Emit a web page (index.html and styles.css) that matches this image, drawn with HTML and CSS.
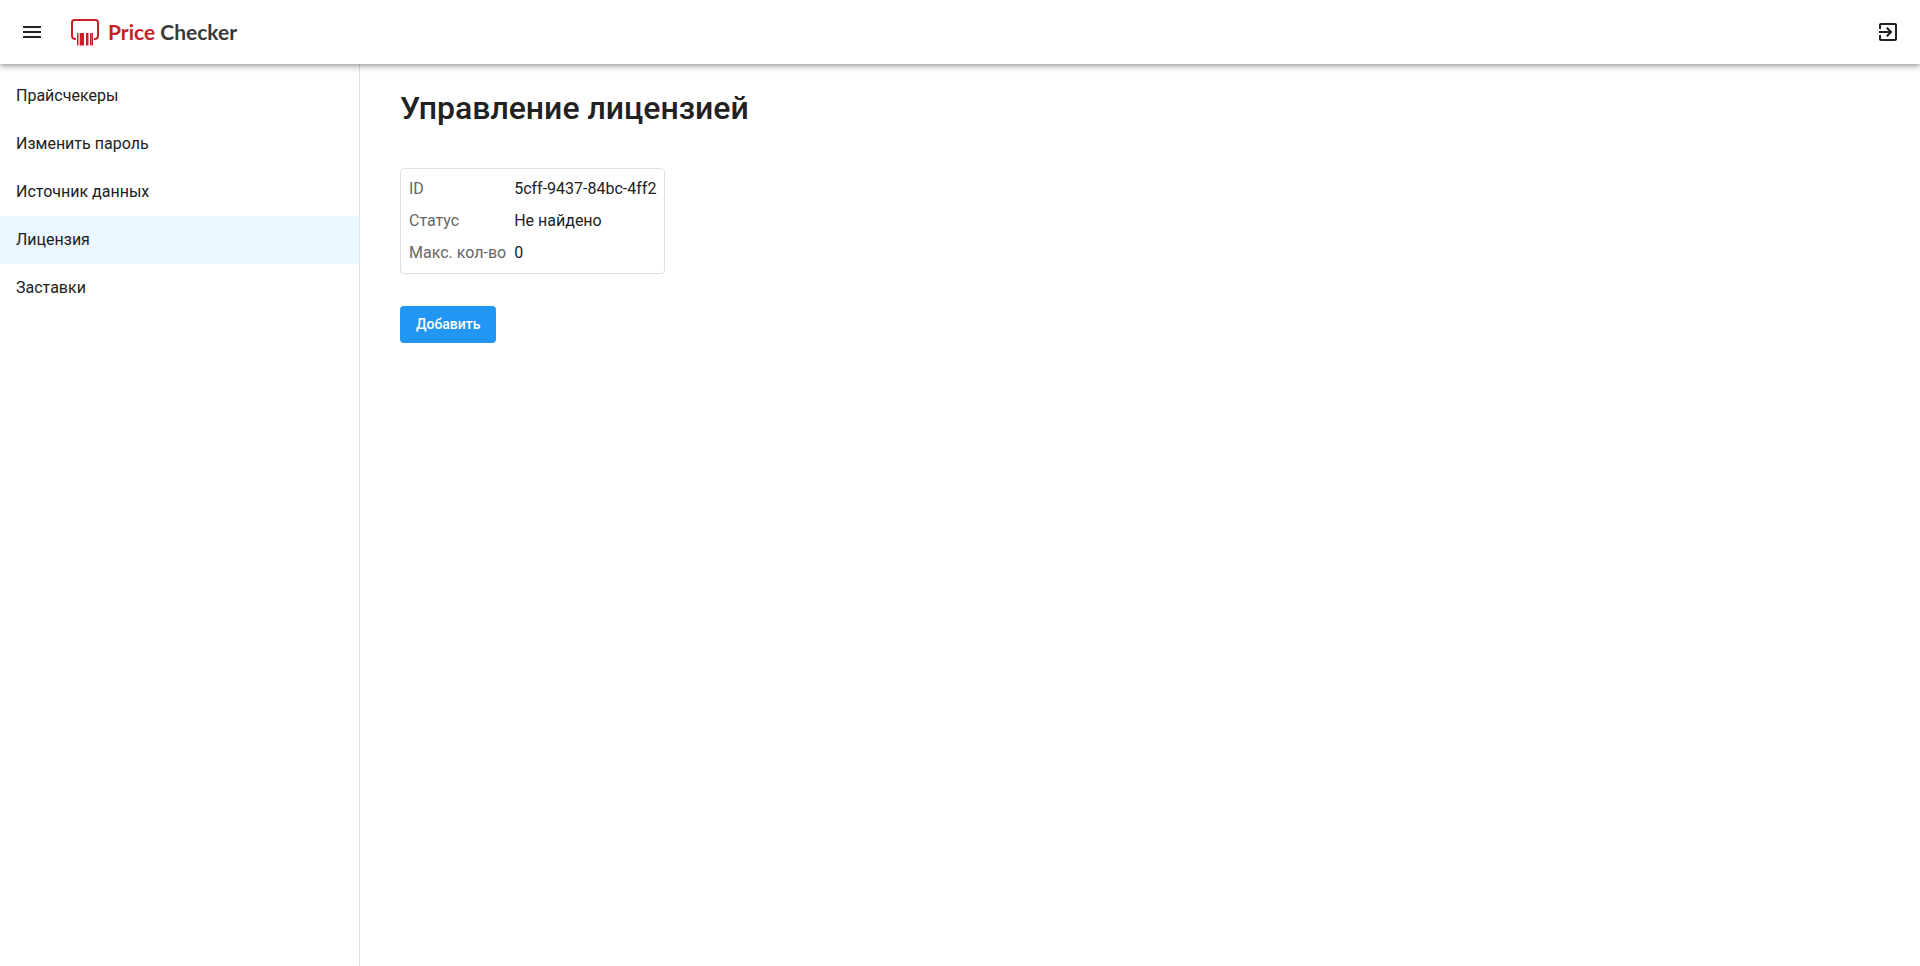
FILE: index.html
```
<!DOCTYPE html>
<html lang="ru">
<head>
  <meta charset="UTF-8">
  <meta name="viewport" content="width=device-width, initial-scale=1.0">
  <title>Price Checker</title>
  <link rel="stylesheet" href="styles.css">
</head>
<body>

  <header class="toolbar">
    <button type="button" class="icon-button" aria-label="Меню">
      <svg viewBox="0 0 24 24" width="24" height="24"><path d="M3 18h18v-2H3v2zm0-5h18v-2H3v2zm0-7v2h18V6H3z"/></svg>
    </button>
    <a href="#" class="logo">
      <svg class="logo-icon" viewBox="0 0 28 28" width="28" height="28">
        <path class="logo-frame" d="M5 21H4.500Q1 21 1 17.500V4.500Q1 2 3.500 2h21Q27 2 27 4.500v13Q27 21 23.500 21H23"/>
        <path d="M6 15h1v12.500H6zM7.500 15h.8v12.500h-.8zM9 15h4v12.500H9zM15 15h2v12.500h-2zM17.500 15h.5v12.500h-.5zM19 15h1v12.500h-1zM20.300 15H22v12.500h-1.700z"/>
      </svg>
      <span class="logo-text"><span class="logo-accent">Price</span> Checker</span>
    </a>
    <button type="button" class="icon-button logout" aria-label="Выйти">
      <svg viewBox="0 0 24 24" width="24" height="24"><path d="M10.090 15.590L11.500 17l5-5-5-5-1.410 1.410L12.670 11H3v2h9.670l-2.580 2.590zM19 3H5c-1.110 0-2 .9-2 2v4h2V5h14v14H5v-4H3v4c0 1.100.89 2 2 2h14c1.100 0 2-.9 2-2V5c0-1.100-.9-2-2-2z"/></svg>
    </button>
  </header>

  <div class="layout">
    <nav class="sidebar">
      <a href="#" class="nav-item">Прайсчекеры</a>
      <a href="#" class="nav-item">Изменить пароль</a>
      <a href="#" class="nav-item">Источник данных</a>
      <a href="#" class="nav-item active">Лицензия</a>
      <a href="#" class="nav-item">Заставки</a>
    </nav>

    <main class="content">
      <h1>Управление лицензией</h1>
      <dl class="license">
        <dt>ID</dt>
        <dd>5cff-9437-84bc-4ff2</dd>
        <dt>Статус</dt>
        <dd>Не найдено</dd>
        <dt>Макс. кол-во</dt>
        <dd>0</dd>
      </dl>
      <button type="button" class="add-button">Добавить</button>
    </main>
  </div>

</body>
</html>
```
FILE: styles.css
```
* {
  box-sizing: border-box;
}

body {
  margin: 0;
  min-height: 100vh;
  display: flex;
  flex-direction: column;
  font-family: Roboto, sans-serif;
  font-size: 16px;
  line-height: 24px;
  color: #212121;
  background-color: #fff;
}

/* header */
.toolbar {
  position: relative;
  z-index: 1;
  display: flex;
  align-items: center;
  height: 64px;
  padding: 0 12px;
  background-color: #fff;
  box-shadow: 0 2px 4px -1px rgba(0, 0, 0, 0.2), 0 4px 5px rgba(0, 0, 0, 0.14), 0 1px 10px rgba(0, 0, 0, 0.12);
}

.icon-button {
  display: flex;
  padding: 8px;
  border: none;
  background: none;
  cursor: pointer;
}

.icon-button svg {
  fill: #212121;
}

.logout {
  margin-left: auto;
}

.logo {
  display: flex;
  align-items: center;
  gap: 9px;
  margin-left: 19px;
  color: #3a3a3a;
  text-decoration: none;
}

.logo-icon {
  fill: #c62026;
}

.logo-frame {
  fill: none;
  stroke: #c62026;
  stroke-width: 2;
}

.logo-text {
  font-family: Lato, sans-serif;
  font-size: 21px;
  font-weight: 700;
}

.logo-accent {
  color: #c62026;
}

/* side menu */
.layout {
  display: flex;
  flex: 1;
}

.sidebar {
  flex: none;
  width: 360px;
  padding: 8px 0;
  border-right: 1px solid #e0e0e0;
}

.nav-item {
  display: block;
  padding: 12px 16px;
  color: #212121;
  text-decoration: none;
}

.nav-item.active {
  background-color: #ebf7fe;
}

/* page */
.content {
  flex: 1;
  padding: 24px 40px;
}

h1 {
  margin: 0 0 40px;
  font-size: 32px;
  line-height: 40px;
  font-weight: 500;
}

.license {
  display: grid;
  grid-template-columns: auto auto;
  gap: 8px;
  width: max-content;
  margin: 0 0 32px;
  padding: 8px;
  border: 1px solid #e0e0e0;
  border-radius: 4px;
}

.license dt {
  color: #666;
}

.license dd {
  margin: 0;
}

.add-button {
  padding: 8px 16px;
  border: none;
  border-radius: 4px;
  background-color: #2196f3;
  color: #fff;
  font-family: inherit;
  font-size: 14px;
  line-height: 21px;
  font-weight: 500;
  cursor: pointer;
}
```
